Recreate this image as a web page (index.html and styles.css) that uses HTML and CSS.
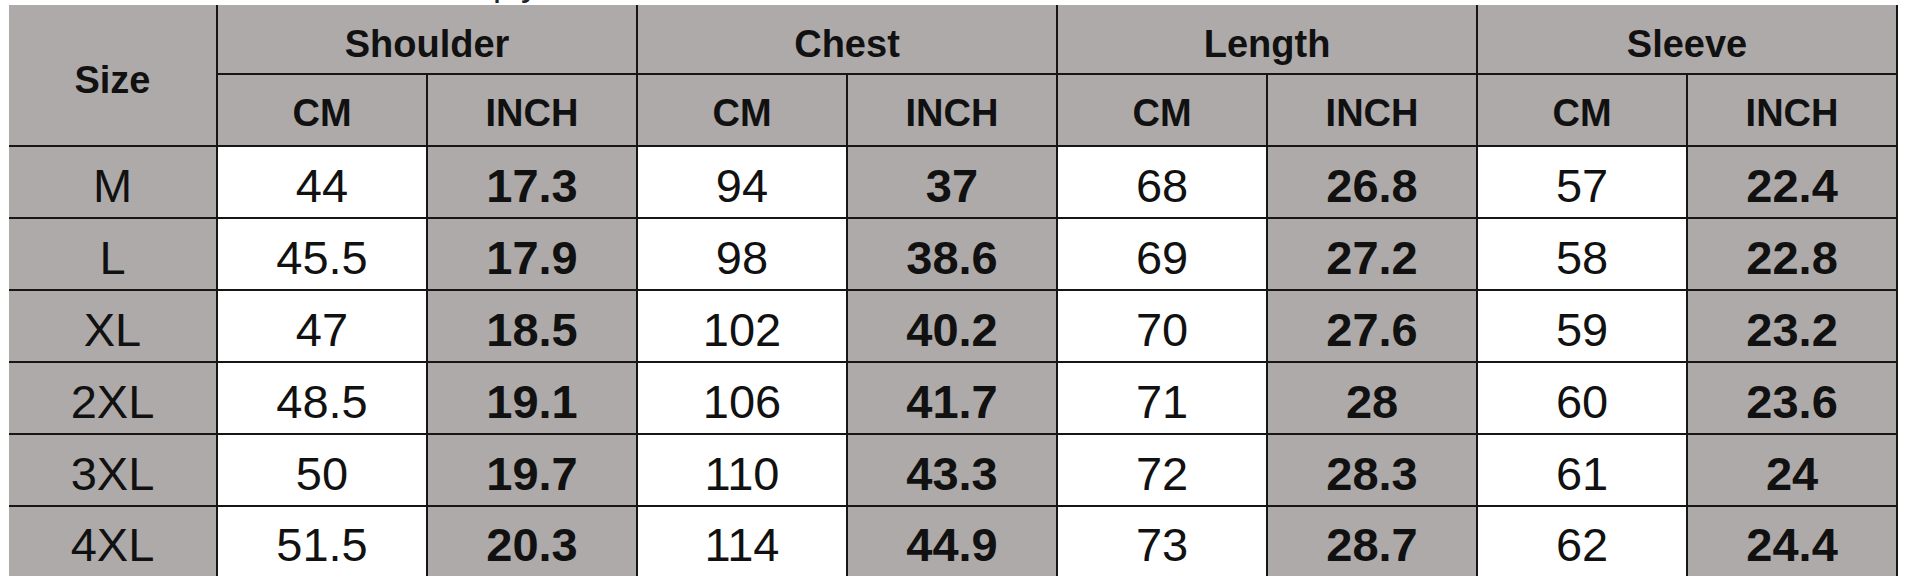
FILE: index.html
```html
<!DOCTYPE html>
<html>
<head>
<meta charset="utf-8">
<link rel="stylesheet" href="styles.css">
</head>
<body>
<div class="caption"><span class="caption-text">simply</span></div>
<table class="chart">
  <colgroup>
    <col class="c-size"><col class="c-val"><col class="c-val"><col class="c-val"><col class="c-val"><col class="c-val"><col class="c-val"><col class="c-val"><col class="c-last">
  </colgroup>
  <thead>
    <tr class="h1">
      <th rowspan="2" class="size-head">Size</th>
      <th colspan="2">Shoulder</th>
      <th colspan="2">Chest</th>
      <th colspan="2">Length</th>
      <th colspan="2" class="last">Sleeve</th>
    </tr>
    <tr class="h2">
      <th>CM</th><th>INCH</th><th>CM</th><th>INCH</th><th>CM</th><th>INCH</th><th>CM</th><th class="last">INCH</th>
    </tr>
  </thead>
  <tbody>
    <tr><td class="sz">M</td><td class="cm">44</td><td class="in">17.3</td><td class="cm">94</td><td class="in">37</td><td class="cm">68</td><td class="in">26.8</td><td class="cm">57</td><td class="in last">22.4</td></tr>
    <tr><td class="sz">L</td><td class="cm">45.5</td><td class="in">17.9</td><td class="cm">98</td><td class="in">38.6</td><td class="cm">69</td><td class="in">27.2</td><td class="cm">58</td><td class="in last">22.8</td></tr>
    <tr><td class="sz">XL</td><td class="cm">47</td><td class="in">18.5</td><td class="cm">102</td><td class="in">40.2</td><td class="cm">70</td><td class="in">27.6</td><td class="cm">59</td><td class="in last">23.2</td></tr>
    <tr><td class="sz">2XL</td><td class="cm">48.5</td><td class="in">19.1</td><td class="cm">106</td><td class="in">41.7</td><td class="cm">71</td><td class="in">28</td><td class="cm">60</td><td class="in last">23.6</td></tr>
    <tr><td class="sz">3XL</td><td class="cm">50</td><td class="in">19.7</td><td class="cm">110</td><td class="in">43.3</td><td class="cm">72</td><td class="in">28.3</td><td class="cm">61</td><td class="in last">24</td></tr>
    <tr class="final"><td class="sz">4XL</td><td class="cm">51.5</td><td class="in">20.3</td><td class="cm">114</td><td class="in">44.9</td><td class="cm">73</td><td class="in">28.7</td><td class="cm">62</td><td class="in last">24.4</td></tr>
  </tbody>
</table>
</body>
</html>
```
FILE: styles.css
```css
html, body {
  margin: 0;
  padding: 0;
  background: #ffffff;
  width: 1906px;
  height: 584px;
  overflow: hidden;
  font-family: "Liberation Sans", Arial, sans-serif;
}

.caption {
  height: 5px;
  overflow: hidden;
  padding-left: 437px;
}

.caption-text {
  display: block;
  margin-top: -35px;
  font-size: 36px;
  line-height: 36px;
  color: #222;
}

.chart {
  margin-left: 9px;
  border-collapse: collapse;
  table-layout: fixed;
  width: 1888px;
}

.c-size { width: 208px; }
.c-val { width: 210px; }
.c-last { width: 210px; }

.chart th,
.chart td {
  padding: 0;
  text-align: center;
  border: 2px solid #161616;
  background: #aeaaa9;
  color: #111;
}

.chart tr:first-child th { border-top: none; }
.chart th:first-child,
.chart td:first-child { border-left: none; }
.final td { border-bottom: none; }

.chart th {
  font-weight: 700;
  font-size: 38px;
}

.h1 th {
  height: 69px;
  padding-top: 10px;
  box-sizing: border-box;
}

.h2 th {
  height: 72px;
  padding-top: 6px;
  box-sizing: border-box;
}

.size-head {
  padding-top: 6px;
}

.chart td {
  height: 72px;
  font-size: 47px;
  padding-top: 6px;
  box-sizing: border-box;
}

.final td { height: 70px; }

.sz {
  font-weight: 400;
  color: #2a2a2a;
}

.cm {
  background: #ffffff !important;
  font-weight: 400;
  color: #1e1e1e;
}

.in {
  font-weight: 700;
  color: #0e0e0e;
}
```
